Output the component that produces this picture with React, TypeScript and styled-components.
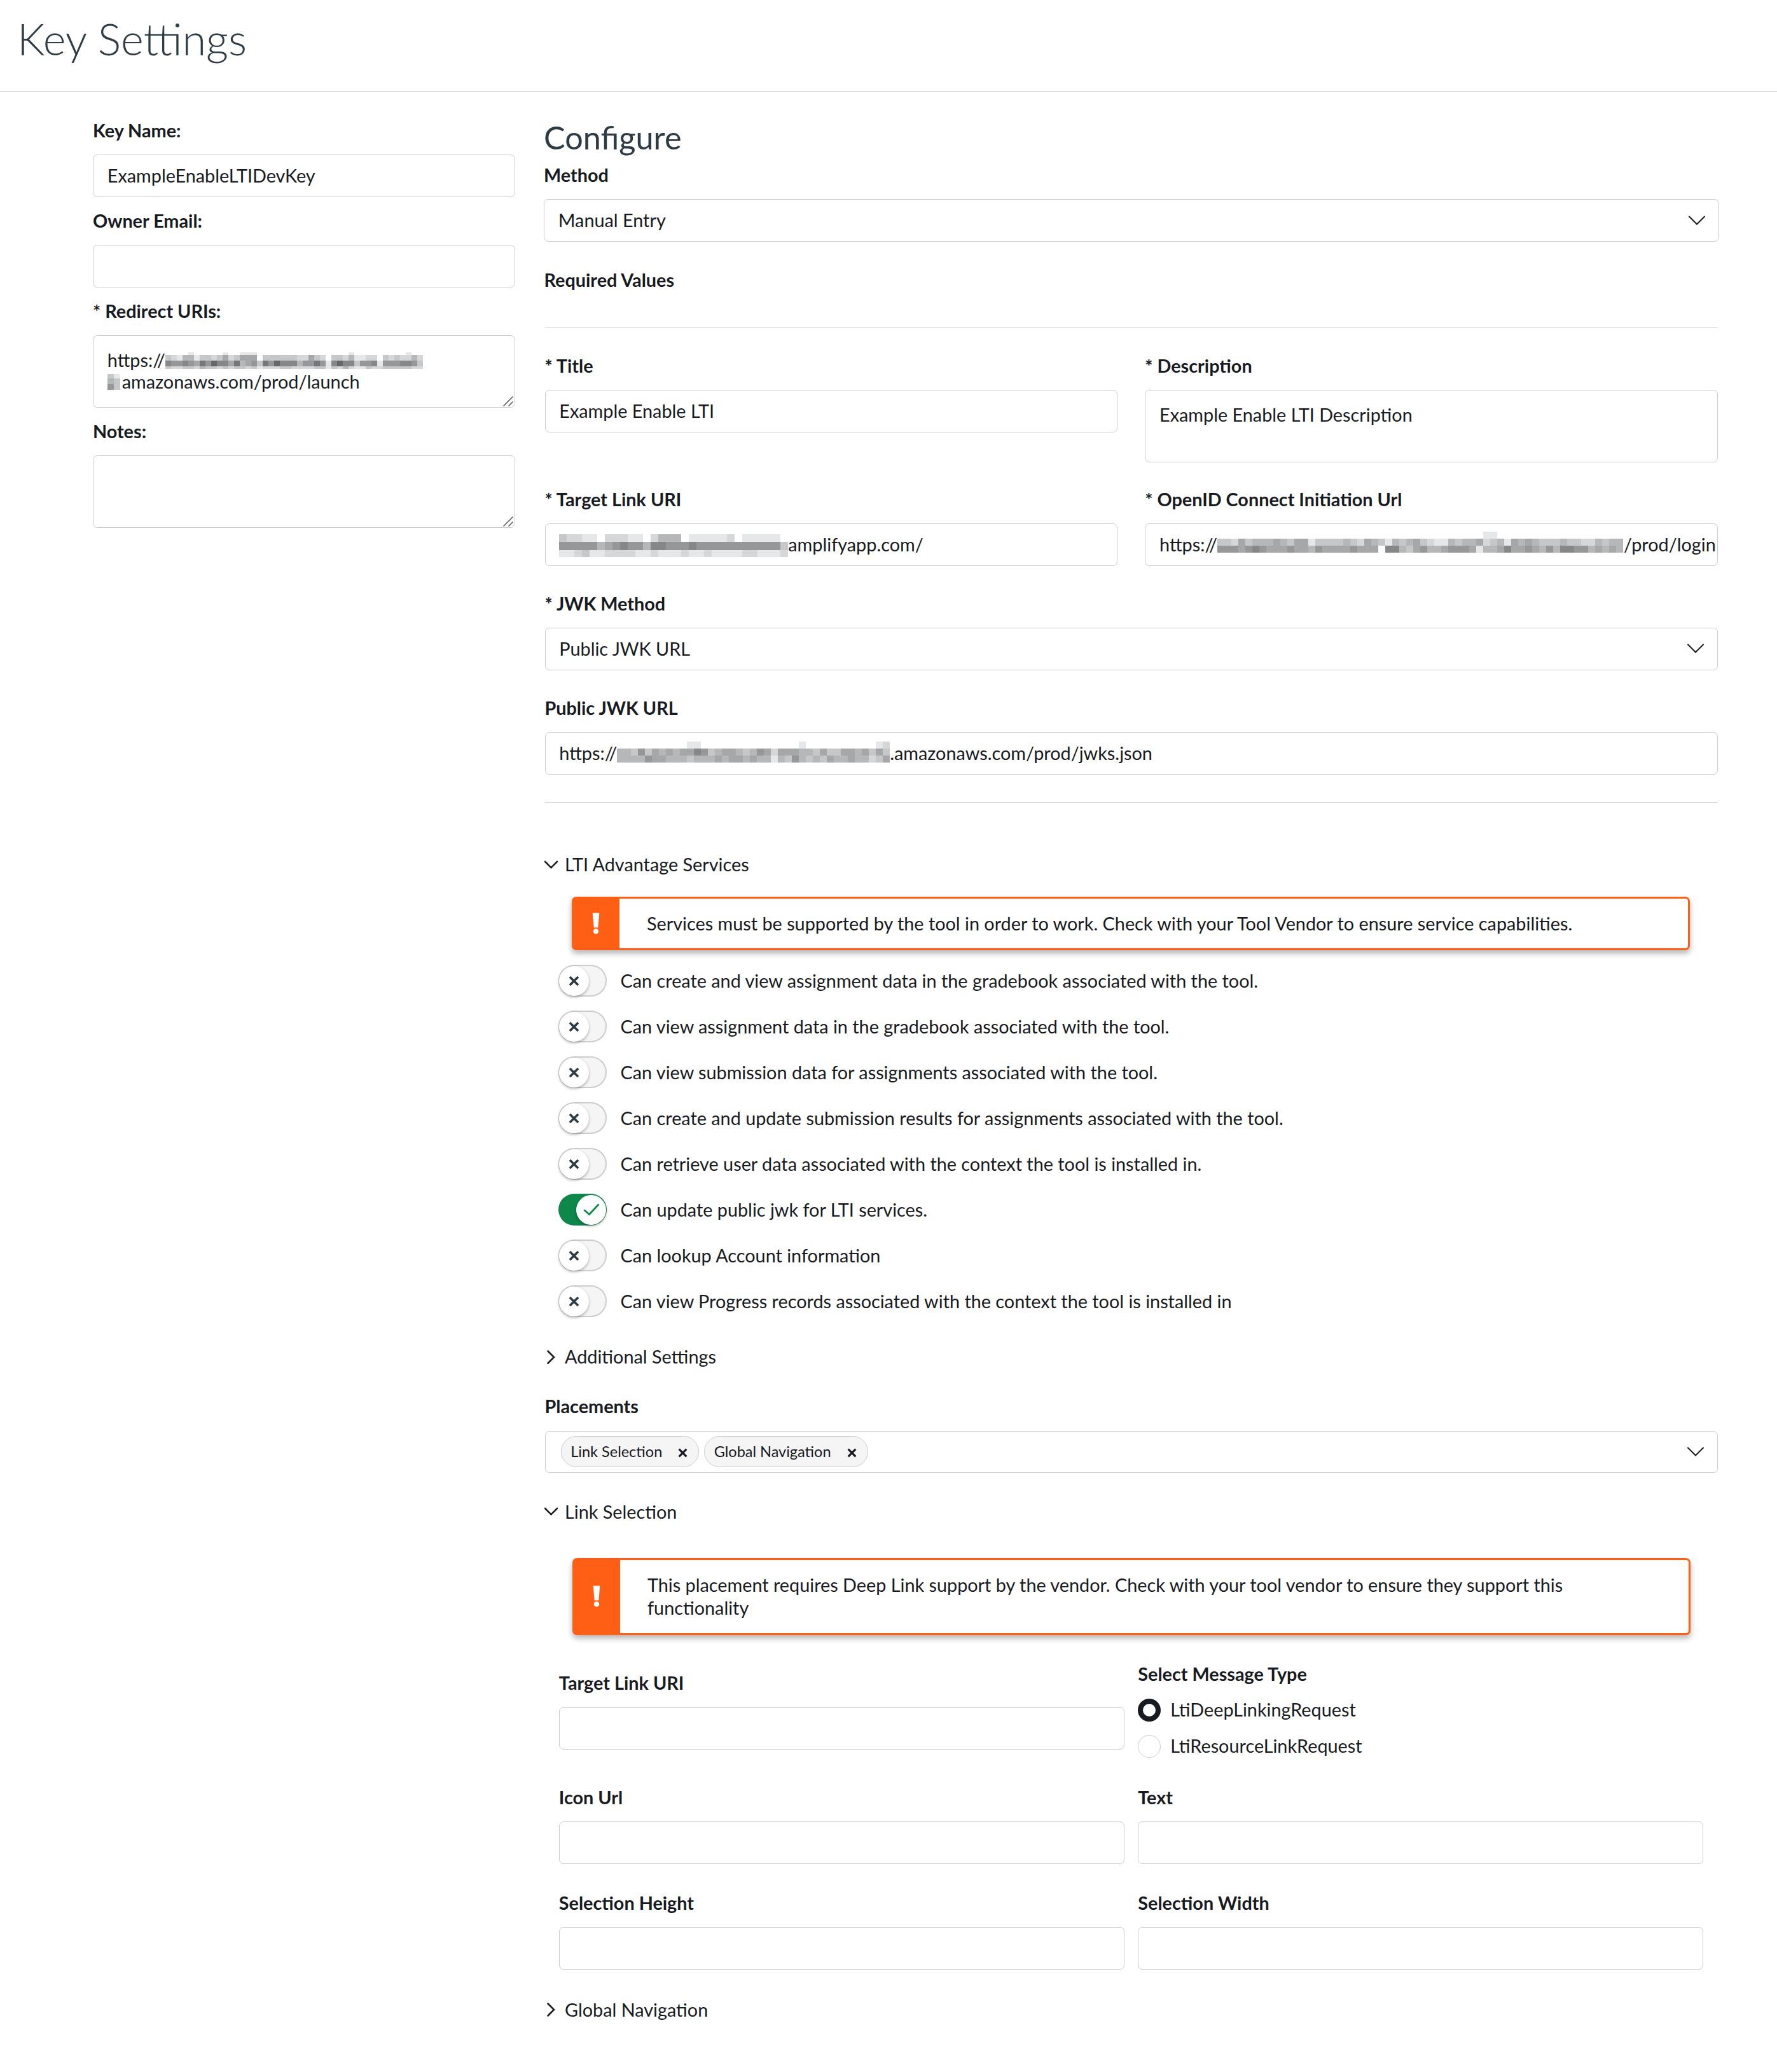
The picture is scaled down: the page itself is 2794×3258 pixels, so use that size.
import React from 'react';
import styled, { createGlobalStyle } from 'styled-components';

const INK = '#171a21';
const HEADING = '#2d3b45';
const BORDER = '#c7cdd1';
const WARNING = '#fe5f15';
const SUCCESS = '#0e874a';

const GlobalStyle = createGlobalStyle`
  *, *::before, *::after { box-sizing: border-box; }
  body {
    margin: 0;
    background: #fff;
    color: ${INK};
    font-family: Lato, 'Liberation Sans', sans-serif;
    font-size: 28.8px;
    line-height: 33.6px;
  }
`;

const Page = styled.div`
  width: 2794px;
  height: 3258px;
  overflow: hidden;
`;

const Header = styled.header`
  height: 144px;
  padding: 20.5px 27px 0;
  border-bottom: 1px solid ${BORDER};
`;

const PageTitle = styled.h1`
  margin: 0;
  color: ${HEADING};
  font-size: 68.4px;
  font-weight: 300;
  line-height: 80px;
`;

const Body = styled.main`
  display: flex;
`;

const Sidebar = styled.aside`
  display: flex;
  flex-direction: column;
  gap: 21px;
  width: 664px;
  margin: 44.6px 0 0 146px;
`;

const Main = styled.section`
  width: 1848px;
  margin: 42.6px 0 0 45px;
`;

const Inner = styled.div`
  padding: 0 2px 0 1.5px;
`;

const MainTitle = styled.h2`
  margin: 0 0 13.4px;
  color: ${HEADING};
  font-size: 50.4px;
  font-weight: 400;
  line-height: 58.8px;
`;

const Group = styled.div`
  display: flex;
  flex-direction: column;
  gap: 21px;
`;

const Label = styled.label`
  display: block;
  font-weight: 700;
  white-space: nowrap;
`;

const Box = styled.div<{ $right?: number }>`
  display: flex;
  align-items: center;
  height: 66.5px;
  padding: 0 ${(p) => p.$right ?? 21}px 0 21.8px;
  border: 1px solid ${BORDER};
  border-radius: 7px;
  background: #fff;
  white-space: nowrap;
`;

const Area = styled.div`
  position: relative;
  height: 113.4px;
  padding: 22px 21.8px;
  border: 1px solid ${BORDER};
  border-radius: 7px;
  background: #fff;
  white-space: nowrap;
`;

const GripMark = styled.svg`
  position: absolute;
  right: 2px;
  bottom: 1px;
`;

const Line = styled.div`
  display: flex;
  align-items: flex-start;
`;

const Spread = styled.span`
  flex: 1;
`;

const SectionHeading = styled.div`
  margin: 44.1px 0 0 -1px;
  font-weight: 700;
`;

const Divider = styled.hr<{ $top: number; $bottom: number }>`
  height: 1px;
  margin: ${(p) => p.$top}px 0 ${(p) => p.$bottom}px;
  border: 0;
  background: ${BORDER};
`;

const RequiredGrid = styled.div`
  display: grid;
  grid-template-columns: 1fr 1fr;
  gap: 42px 43px;
  > .wide {
    grid-column: 1 / -1;
    margin-top: 0.9px;
  }
`;

const Disclosure = styled.div<{ $top: number }>`
  display: flex;
  align-items: center;
  margin-top: ${(p) => p.$top}px;
  padding-left: 1px;
`;

const DisclosureIcon = styled.span`
  display: flex;
  justify-content: center;
  width: 21px;
  margin-right: 11px;
`;

const AlertBox = styled.div<{ $top: number; $left: number }>`
  display: flex;
  width: 1758px;
  margin: ${(p) => p.$top}px 0 0 ${(p) => p.$left}px;
  border: 3px solid ${WARNING};
  border-radius: 7px;
  background: #fff;
  box-shadow: 0 5px 10px rgba(0, 0, 0, 0.17), 0 5px 10px rgba(0, 0, 0, 0.15);
`;

const AlertIcon = styled.div`
  display: flex;
  align-items: center;
  justify-content: center;
  width: 72px;
  padding-right: 3px;
  background: ${WARNING};
`;

const AlertText = styled.div`
  flex: 1;
  padding: 21px 42px 21px 43px;
  line-height: 36.4px;
`;

const ToggleList = styled.div`
  display: flex;
  flex-direction: column;
  gap: 22px;
  margin: 23.2px 0 0 21.5px;
`;

const ToggleRow = styled.div`
  display: flex;
  align-items: center;
  gap: 21.5px;
  height: 50px;
`;

const Track = styled.span<{ $on?: boolean }>`
  display: flex;
  justify-content: ${(p) => (p.$on ? 'flex-end' : 'flex-start')};
  align-items: center;
  width: 76px;
  height: 50px;
  padding: 0 1px;
  border-radius: 25px;
  background: ${(p) => (p.$on ? SUCCESS : '#f5f5f5')};
  box-shadow: inset 0 0 0 ${(p) => (p.$on ? 0 : 2)}px ${BORDER};
`;

const Knob = styled.span`
  display: flex;
  align-items: center;
  justify-content: center;
  width: 47px;
  height: 47px;
  border-radius: 50%;
  background: #fff;
  box-shadow: 0 2px 4px rgba(0, 0, 0, 0.3);
`;

const Tag = styled.span`
  display: flex;
  align-items: center;
  gap: 25px;
  height: 49px;
  padding: 0 17px 0 14.5px;
  border: 1px solid ${BORDER};
  border-radius: 25px;
  background: #f5f5f5;
  font-size: 23.5px;
  > svg { margin-top: 3px; }
`;

const Tags = styled.div`
  display: flex;
  gap: 8px;
  margin-left: 2.5px;
`;

const PlacementsGroup = styled(Group)`
  margin-top: 44px;
`;

const PlacementGrid = styled.div`
  display: grid;
  grid-template-columns: 889px 889px;
  gap: 44.8px 21.5px;
  margin: 44.7px 0 0 22.3px;
`;

const FieldPad = styled.div`
  padding-top: 14.3px;
`;

const RadioGroup = styled.div`
  display: flex;
  flex-direction: column;
  padding-bottom: 1.9px;
`;

const Radio = styled.div`
  display: flex;
  align-items: center;
  gap: 15px;
  height: 35px;
  margin-top: 22px;
`;

const RadioDot = styled.span<{ $on?: boolean }>`
  width: 36px;
  height: 36px;
  border: ${(p) => (p.$on ? `8px solid ${INK}` : `1px solid ${BORDER}`)};
  border-radius: 50%;
  background: #fff;
`;

const MosaicSvg = styled.svg<{ $left?: number; $top?: number; $right?: number }>`
  display: block;
  flex: none;
  margin: ${(p) => p.$top ?? 0}px ${(p) => p.$right ?? 0}px 0 ${(p) => p.$left ?? 0}px;
`;

/* Pixelated redaction: each string is a row of cells, one hex digit of grey per cell. */
type MosaicProps = {
  cell: number;
  heights: number[];
  rows: string[];
  left?: number;
  top?: number;
  right?: number;
};

function Mosaic({ cell, heights, rows, left, top, right }: MosaicProps) {
  const width = cell * rows[0].length;
  const height = heights.reduce((a, b) => a + b, 0);
  let y = 0;
  return (
    <MosaicSvg width={width} height={height} shapeRendering="crispEdges" $left={left} $top={top} $right={right}>
      {rows.map((row, r) => {
        const rowY = y;
        y += heights[r];
        return [...row].map((c, i) =>
          c === 'f' ? null : (
            <rect key={`${r}-${i}`} x={i * cell} y={rowY} width={cell} height={heights[r]} fill={`#${c}6${c}7${c}9`} />
          )
        );
      })}
    </MosaicSvg>
  );
}

const ChevronDown = ({ w, h, s, color = INK }: { w: number; h: number; s: number; color?: string }) => (
  <svg width={w} height={h + 2} viewBox={`0 0 ${w} ${h + 2}`} fill="none" stroke={color} strokeWidth={s}>
    <path d={`M1 1.5 L${w / 2} ${h - 0.5} L${w - 1} 1.5`} strokeLinecap="round" />
  </svg>
);

const ChevronRight = () => (
  <svg width="13" height="22" viewBox="0 0 13 22" fill="none" stroke={INK} strokeWidth="2.6">
    <path d="M1.5 1.5 L11 11 L1.5 20.5" strokeLinecap="round" />
  </svg>
);

const Cross = ({ size, color = INK, s = 3.4 }: { size: number; color?: string; s?: number }) => (
  <svg width={size} height={size} viewBox="0 0 16 16" fill="none" stroke={color} strokeWidth={s}>
    <path d="M1.8 1.8 L14.2 14.2 M14.2 1.8 L1.8 14.2" />
  </svg>
);

const Check = () => (
  <svg width="26" height="20" viewBox="0 0 26 20" fill="none" stroke={SUCCESS} strokeWidth="2.8">
    <path d="M1.5 10.5 L9.5 17.5 L24.5 1.5" />
  </svg>
);

const Exclamation = () => (
  <svg width="12" height="34" viewBox="0 0 12 34" fill="#fff">
    <path d="M0.7 0.5 H11.3 L9.3 23.5 H2.7 Z" />
    <circle cx="6" cy="29.4" r="4.2" />
  </svg>
);

const Grip = () => (
  <GripMark width="16" height="16" viewBox="0 0 16 16" fill="none" stroke="#555" strokeWidth="1.5">
    <path d="M0.5 15.5 L15.5 0.5 M8.5 15.5 L15.5 8.5" />
  </GripMark>
);

function Field({ label, wide, children }: { label: string; wide?: boolean; children?: React.ReactNode }) {
  return (
    <Group className={wide ? 'wide' : undefined}>
      <Label>{label}</Label>
      {children ?? <Box />}
    </Group>
  );
}

function Alert({ top, left, children }: { top: number; left: number; children: React.ReactNode }) {
  return (
    <AlertBox $top={top} $left={left}>
      <AlertIcon>
        <Exclamation />
      </AlertIcon>
      <AlertText>{children}</AlertText>
    </AlertBox>
  );
}

const SERVICES: { text: string; on?: boolean }[] = [
  { text: 'Can create and view assignment data in the gradebook associated with the tool.' },
  { text: 'Can view assignment data in the gradebook associated with the tool.' },
  { text: 'Can view submission data for assignments associated with the tool.' },
  { text: 'Can create and update submission results for assignments associated with the tool.' },
  { text: 'Can retrieve user data associated with the context the tool is installed in.' },
  { text: 'Can update public jwk for LTI services.', on: true },
  { text: 'Can lookup Account information' },
  { text: 'Can view Progress records associated with the context the tool is installed in' },
];

export default function App() {
  return (
    <Page>
      <GlobalStyle />
      <Header>
        <PageTitle>Key Settings</PageTitle>
      </Header>
      <Body>
        <Sidebar>
          <Field label="Key Name:">
            <Box>ExampleEnableLTIDevKey</Box>
          </Field>
          <Field label="Owner Email:" />
          <Field label="* Redirect URIs:">
            <Area>
              <Line>
                https://
                <Mosaic
                  cell={9}
                  heights={[4, 9, 9, 4]}
                  top={4}
                  rows={[
                    'ffffefffffeffeeeffffffffffffffffefffffffffefff',
                    'cdebbeccdcadcaaafccccccddacdfccdbeeddfcdcddbdf',
                    '89989a79688a7ba9c796888b9979e8688c998e999889cf',
                    'cddccdbccdcdccdcedddccddddccecdbdeecddcccccddf',
                  ]}
                />
              </Line>
              <Line>
                <Mosaic cell={10} heights={[7, 9, 9]} top={4} right={3} rows={['ce', 'bc', '9c']} />
                amazonaws.com/prod/launch
              </Line>
              <Grip />
            </Area>
          </Field>
          <Field label="Notes:">
            <Area>
              <Grip />
            </Area>
          </Field>
        </Sidebar>
        <Main>
          <MainTitle>Configure</MainTitle>
          <Field label="Method">
            <Box>
              Manual Entry
              <Spread />
              <ChevronDown w={26} h={14} s={2} />
            </Box>
          </Field>
          <Inner>
            <SectionHeading>Required Values</SectionHeading>
            <Divider $top={57.7} $bottom={42.4} />
            <RequiredGrid>
              <Field label="* Title">
                <Box>Example Enable LTI</Box>
              </Field>
              <Field label="* Description">
                <Area>Example Enable LTI Description</Area>
              </Field>
              <Field label="* Target Link URI">
                <Box>
                  <Mosaic
                    cell={12}
                    heights={[12, 13, 11]}
                    top={4}
                    rows={[
                      'cddeefdddeefdbbbfeeeeedfeeeeef',
                      '99999ba9899b88999899999999999c',
                      'eedceeddddeedeeedeedeeeeddeeed',
                    ]}
                  />
                  amplifyapp.com/
                </Box>
              </Field>
              <Field label="* OpenID Connect Initiation Url">
                <Box $right={0}>
                  https://
                  <Mosaic
                    cell={11}
                    heights={[11, 11, 11]}
                    top={-8}
                    right={1}
                    rows={[
                      'ffffffffffffffffffffffffffffffffffffffeeffffffffffffffffff',
                      'ccdacbbbabcaaeccccbcdabcebcbacdeebcbbadcbeababcccbccddbcbb',
                      '999a989aaa9aab9aaaa9aaaf88bca9bba999aebba8aa9ab9b8899babab',
                    ]}
                  />
                  /prod/login
                </Box>
              </Field>
              <Field label="* JWK Method" wide>
                <Box>
                  Public JWK URL
                  <Spread />
                  <ChevronDown w={26} h={14} s={2} />
                </Box>
              </Field>
              <Field label="Public JWK URL" wide>
                <Box>
                  https://
                  <Mosaic
                    cell={11}
                    heights={[11, 11, 11]}
                    top={-3}
                    rows={[
                      'ffffffffffeeffffffffffffffeffffffffffed',
                      'bbc9cababaa89cbaabcb9adaaabbcaccaabacac',
                      'bbbb9aabbbcbbbabaababbebc9bcbcabbabbdca',
                    ]}
                  />
                  .amazonaws.com/prod/jwks.json
                </Box>
              </Field>
            </RequiredGrid>
            <Divider $top={43.2} $bottom={81} />
          </Inner>
          <Disclosure $top={0.8}>
            <DisclosureIcon>
              <ChevronDown w={22} h={12} s={2.6} />
            </DisclosureIcon>
            LTI Advantage Services
          </Disclosure>
          <Inner>
            <Alert top={33.4} left={42.5}>
              Services must be supported by the tool in order to work. Check with your Tool Vendor to ensure service
              capabilities.
            </Alert>
            <ToggleList>
              {SERVICES.map((s) => (
                <ToggleRow key={s.text}>
                  <Track $on={s.on}>
                    <Knob>{s.on ? <Check /> : <Cross size={17} color={HEADING} />}</Knob>
                  </Track>
                  {s.text}
                </ToggleRow>
              ))}
            </ToggleList>
          </Inner>
          <Disclosure $top={46}>
            <DisclosureIcon>
              <ChevronRight />
            </DisclosureIcon>
            Additional Settings
          </Disclosure>
          <Inner>
            <PlacementsGroup>
              <Label>Placements</Label>
              <Box>
                <Tags>
                  <Tag>
                    Link Selection
                    <Cross size={15} />
                  </Tag>
                  <Tag>
                    Global Navigation
                    <Cross size={15} />
                  </Tag>
                </Tags>
                <Spread />
                <ChevronDown w={26} h={14} s={2} />
              </Box>
            </PlacementsGroup>
          </Inner>
          <Disclosure $top={44.5}>
            <DisclosureIcon>
              <ChevronDown w={22} h={12} s={2.6} />
            </DisclosureIcon>
            Link Selection
          </Disclosure>
          <Inner>
            <Alert top={55.8} left={43.5}>
              This placement requires Deep Link support by the vendor. Check with your tool vendor to ensure they
              support this functionality
            </Alert>
            <PlacementGrid>
              <FieldPad>
                <Field label="Target Link URI" />
              </FieldPad>
              <RadioGroup>
                <Label>Select Message Type</Label>
                <Radio>
                  <RadioDot $on />
                  LtiDeepLinkingRequest
                </Radio>
                <Radio>
                  <RadioDot />
                  LtiResourceLinkRequest
                </Radio>
              </RadioGroup>
              <Field label="Icon Url" />
              <Field label="Text" />
              <Field label="Selection Height" />
              <Field label="Selection Width" />
            </PlacementGrid>
          </Inner>
          <Disclosure $top={46.8}>
            <DisclosureIcon>
              <ChevronRight />
            </DisclosureIcon>
            Global Navigation
          </Disclosure>
        </Main>
      </Body>
    </Page>
  );
}
